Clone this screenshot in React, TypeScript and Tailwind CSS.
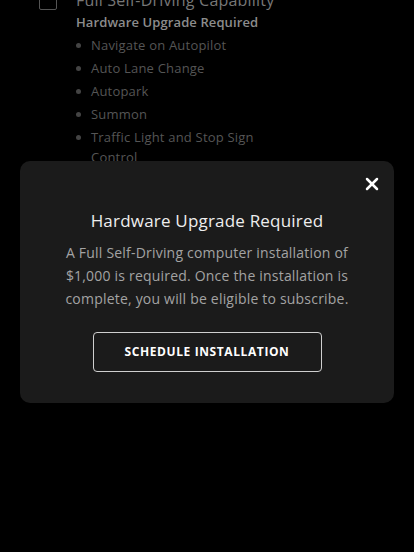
import { X } from "lucide-react";

const features = [
  "Navigate on Autopilot",
  "Auto Lane Change",
  "Autopark",
  "Summon",
  "Traffic Light and Stop Sign Control",
];

export default function App() {
  return (
    <div
      className="relative h-[552px] w-[414px] overflow-hidden bg-black"
      style={{ fontFamily: "'Open Sans', 'Liberation Sans', sans-serif" }}
    >
      {/* scrolled page content behind the modal */}
      <div className="-mt-[10px] flex gap-[19px] pl-[39px]">
        <div className="mt-[2px] h-[18px] w-[18px] rounded-[2px] border border-[#555]" />
        <div>
          <div className="text-[16px] leading-[20px] tracking-[0.2px] text-[#777]">Full Self-Driving Capability</div>
          <div className="mt-[2px] text-[13px] font-semibold leading-[20px] tracking-[0.1px] text-[#8c8c8c]">
            Hardware Upgrade Required
          </div>
          <ul className="mt-[3px] flex flex-col gap-[3px]">
            {features.map((f) => (
              <li key={f} className="flex items-start gap-[10px]">
                <span className="mt-[8px] h-[5px] w-[5px] shrink-0 rounded-full bg-[#444]" />
                <span className="w-[175px] text-[13px] leading-[20px] tracking-[0.2px] text-[#555]">{f}</span>
              </li>
            ))}
          </ul>
        </div>
      </div>

      {/* Modal */}
      <div className="absolute left-5 top-[161px] w-[374px] rounded-[10px] bg-[#1b1b1b] px-6 pb-[31px] pt-[48px] text-center">
        <button className="absolute right-[12px] top-[13px] text-white">
          <X size={20} strokeWidth={3} />
        </button>
        <div className="text-[17px] leading-[24px] tracking-[0.2px] text-[#eeeeee]">Hardware Upgrade Required</div>
        <p className="mt-[8px] text-[14px] leading-[23px] tracking-[0.2px] text-[#a3a3a3]">
          A Full Self-Driving computer installation of $1,000 is required. Once the installation is complete, you
          will be eligible to subscribe.
        </p>
        <div className="mt-[22px] flex justify-center">
          <button className="h-[40px] w-[229px] rounded-[4px] border-[1.5px] border-[#cfcfcf] text-[12px] font-bold tracking-[0.6px] text-white">
            SCHEDULE INSTALLATION
          </button>
        </div>
      </div>
    </div>
  );
}
